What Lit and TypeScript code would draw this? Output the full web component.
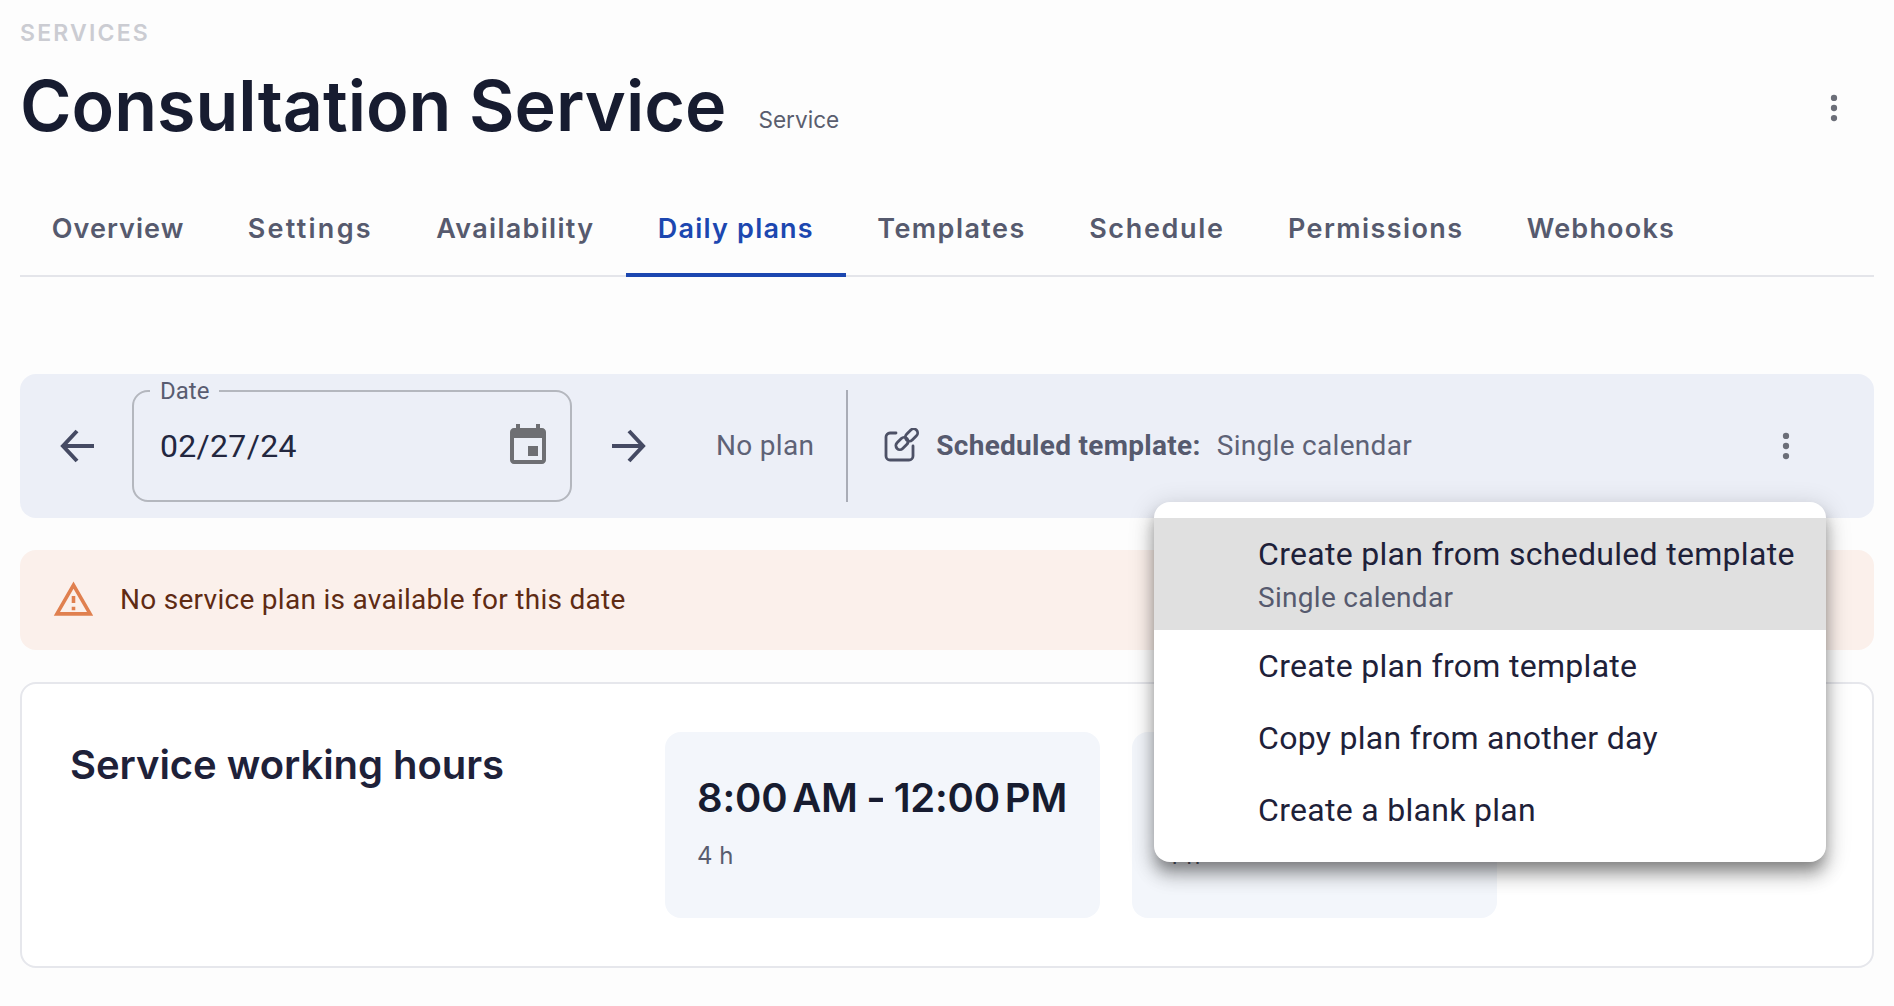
import { LitElement, html, css } from "lit";
import { customElement } from "lit/decorators.js";

const TABS: [string, number][] = [
  ["Overview", 1.05], ["Settings", 2.25], ["Availability", 1.3], ["Daily plans", 1.2],
  ["Templates", 1.45], ["Schedule", 1.65], ["Permissions", 1.4], ["Webhooks", 1.2],
];

const kebab = html`<svg class="kebab" viewBox="0 0 24 24" width="36" height="36"><circle cx="12" cy="5.3" r="2.1"/><circle cx="12" cy="12" r="2.1"/><circle cx="12" cy="18.7" r="2.1"/></svg>`;

@customElement("app-root")
export class AppRoot extends LitElement {
  static styles = css`
    :host { display: block; height: 1006px; box-sizing: border-box; padding: 0 20px; background: #fdfdfd; font-family: Roboto, sans-serif; color: #1e2139; position: relative; overflow: hidden; }
    .crumb { font: 600 23px/28px Inter, sans-serif; letter-spacing: 2.2px; color: #cbccd2; padding-top: 19px; }
    .head { display: flex; align-items: flex-start; height: 90px; padding-top: 14px; position: relative; }
    h1 { margin: 0; font: 600 70px/90px Inter, sans-serif; letter-spacing: 0; color: #171c30; }
    .type { margin: 44px 0 0 32px; font: 400 22.6px/30px Inter, sans-serif; color: #5a5d6e; }
    .head .kebab { position: absolute; right: 22px; top: 43px; }
    .kebab { fill: #6b6e78; display: block; }
    .tabs { display: flex; margin-top: 45px; height: 81px; box-sizing: border-box; border-bottom: 2px solid #e4e5ea; }
    .tab { padding: 0 31.7px; font: 600 27px/66px Inter, sans-serif; color: #565a6e; height: 79px; box-sizing: border-box; }
    .tab.active { color: #1c47b0; border-bottom: 4px solid #1c47b0; height: 81px; }
    .bar { display: flex; align-items: center; height: 144px; margin-top: 97px; background: #eceff7; border-radius: 16px; position: relative; }
    .arrow { display: block; fill: none; stroke: #454a63; stroke-width: 4; }
    .arrow.l { margin-left: 40px; }
    .field { position: relative; width: 440px; height: 112px; box-sizing: border-box; margin-left: 36px; border: 2px solid #b4b7be; border-radius: 16px; display: flex; align-items: center; justify-content: space-between; padding: 0 18px 0 26px; }
    .legend { position: absolute; left: 16px; top: -15px; padding: 0 10px; background: #eceff7; font: 400 24px/28px Roboto, sans-serif; color: #595c70; }
    .value { font: 400 32px/40px Roboto, sans-serif; letter-spacing: 0.3px; color: #23273f; }
    .cal { fill: #6e6f73; display: block; }
    .arrow.r { margin-left: 38px; }
    .noplan { margin-left: 70px; font: 400 28px/36px Roboto, sans-serif; letter-spacing: 0.3px; color: #5e6276; }
    .div { width: 2px; height: 112px; background: #a9acb6; margin-left: 32px; }
    .link { margin-left: 36px; display: block; fill: none; stroke: #4d5166; stroke-width: 2.8; }
    .sched { margin-left: 16px; font: 700 28px/36px Roboto, sans-serif; letter-spacing: 0.3px; color: #565a6e; }
    .tname { margin-left: 16px; font: 400 28px/36px Roboto, sans-serif; letter-spacing: 0.3px; color: #5e6276; }
    .bar .kebab { position: absolute; right: 70px; top: 54px; }
    .warn { display: flex; align-items: center; height: 100px; margin-top: 32px; background: #fbf0eb; border-radius: 16px; color: #5f2b13; font: 400 28px/36px Roboto, sans-serif; letter-spacing: 0.28px; padding-left: 32px; }
    .warn svg { display: block; fill: #e0804f; margin-right: 25px; margin-top: -2px; }
    .card { display: flex; height: 286px; box-sizing: border-box; margin-top: 32px; background: #fff; border: 2px solid #e6e7ec; border-radius: 16px; padding: 48px 0 0 48px; }
    h2 { margin: 0; width: 595px; padding-top: 3px; font: 600 40px/60px Inter, sans-serif; letter-spacing: -0.05px; color: #1e2139; }
    .slot { height: 186px; box-sizing: border-box; background: #f3f6fb; border-radius: 16px; padding: 42px 32px 0; margin-right: 32px; }
    .slot.a { width: 435px; }
    .slot.b { width: 365px; }
    .time { font: 600 40px/48px Inter, sans-serif; letter-spacing: -0.2px; word-spacing: -5px; color: #171c30; white-space: nowrap; }
    .dash { display: inline-block; transform: scaleX(0.7); margin: 0 8px; }
    .dur { margin-top: 18px; font: 400 24px/32px Inter, sans-serif; color: #5a5d6e; }
    .menu { position: absolute; left: 1154px; top: 502px; width: 672px; background: #fff; border-radius: 16px; padding: 16px 0; box-shadow: 0 10px 14px -4px rgba(0,0,0,.32), 0 14px 18px 2px rgba(0,0,0,.18), 0 5px 25px 4px rgba(0,0,0,.12); }
    .item { height: 72px; padding-left: 104px; display: flex; flex-direction: column; justify-content: center; font: 400 32px/36px Roboto, sans-serif; letter-spacing: 0.3px; color: #1e2139; }
    .item.on { height: 112px; box-sizing: border-box; padding-top: 18px; justify-content: flex-start; background: #e0e0e0; }
    .sub { font: 400 28px/36px Roboto, sans-serif; letter-spacing: 0.3px; color: #565a6e; margin-top: 8px; }
  `;

  render() {
    return html`
      <div class="crumb">SERVICES</div>
      <div class="head">
        <h1>Consultation Service</h1><span class="type">Service</span>
        ${kebab}
      </div>
      <nav class="tabs">
        ${TABS.map(([t, ls]) => html`<div class="tab ${t === "Daily plans" ? "active" : ""}" style="letter-spacing:${ls}px">${t}</div>`)}
      </nav>
      <section class="bar">
        <svg class="arrow l" width="36" height="36" viewBox="0 0 36 36"><path d="M34 18H4M17 3L3 18l14 15"/></svg>
        <div class="field">
          <span class="legend">Date</span>
          <span class="value">02/27/24</span>
          <svg class="cal" width="48" height="48" viewBox="0 0 24 24"><path d="M17 12h-5v5h5v-5zM16 1v2H8V1H6v2H5c-1.11 0-1.99.9-1.99 2L3 19c0 1.1.89 2 2 2h14c1.1 0 2-.9 2-2V5c0-1.1-.9-2-2-2h-1V1h-2zm3 18H5V8h14v11z"/></svg>
        </div>
        <svg class="arrow r" width="36" height="36" viewBox="0 0 36 36"><path d="M2 18h30M19 3l14 15-14 15"/></svg>
        <span class="noplan">No plan</span>
        <span class="div"></span>
        <svg class="link" width="36" height="36" viewBox="0 0 36 36">
          <path d="M12 5H6a4 4 0 0 0-4 4v19a4 4 0 0 0 4 4h19a4 4 0 0 0 4-4V18" stroke-linecap="round"/>
          <rect x="11" y="11.5" width="14" height="8" rx="4" transform="rotate(-45 18 15.5)"/>
          <rect x="20.5" y="3" width="14" height="8" rx="4" transform="rotate(-45 27.5 7)"/>
        </svg>
        <span class="sched">Scheduled template:</span>
        <span class="tname">Single calendar</span>
        ${kebab}
      </section>
      <section class="warn">
        <svg width="43" height="43" viewBox="0 0 24 24"><path d="M12 5.99L19.53 19H4.47L12 5.99M12 2L1 21h22L12 2zm1 14h-2v2h2v-2zm0-6h-2v4h2v-4z"/></svg>
        No service plan is available for this date
      </section>
      <section class="card">
        <h2>Service working hours</h2>
        <div class="slot a"><div class="time">8:00 AM<span class="dash">–</span>12:00 PM</div><div class="dur">4 h</div></div>
        <div class="slot b"><div class="time">1:00 PM<span class="dash">–</span>4 PM</div><div class="dur">4 h</div></div>
      </section>
      <div class="menu">
        <div class="item on">Create plan from scheduled template<div class="sub">Single calendar</div></div>
        <div class="item">Create plan from template</div>
        <div class="item">Copy plan from another day</div>
        <div class="item">Create a blank plan</div>
      </div>
    `;
  }
}
